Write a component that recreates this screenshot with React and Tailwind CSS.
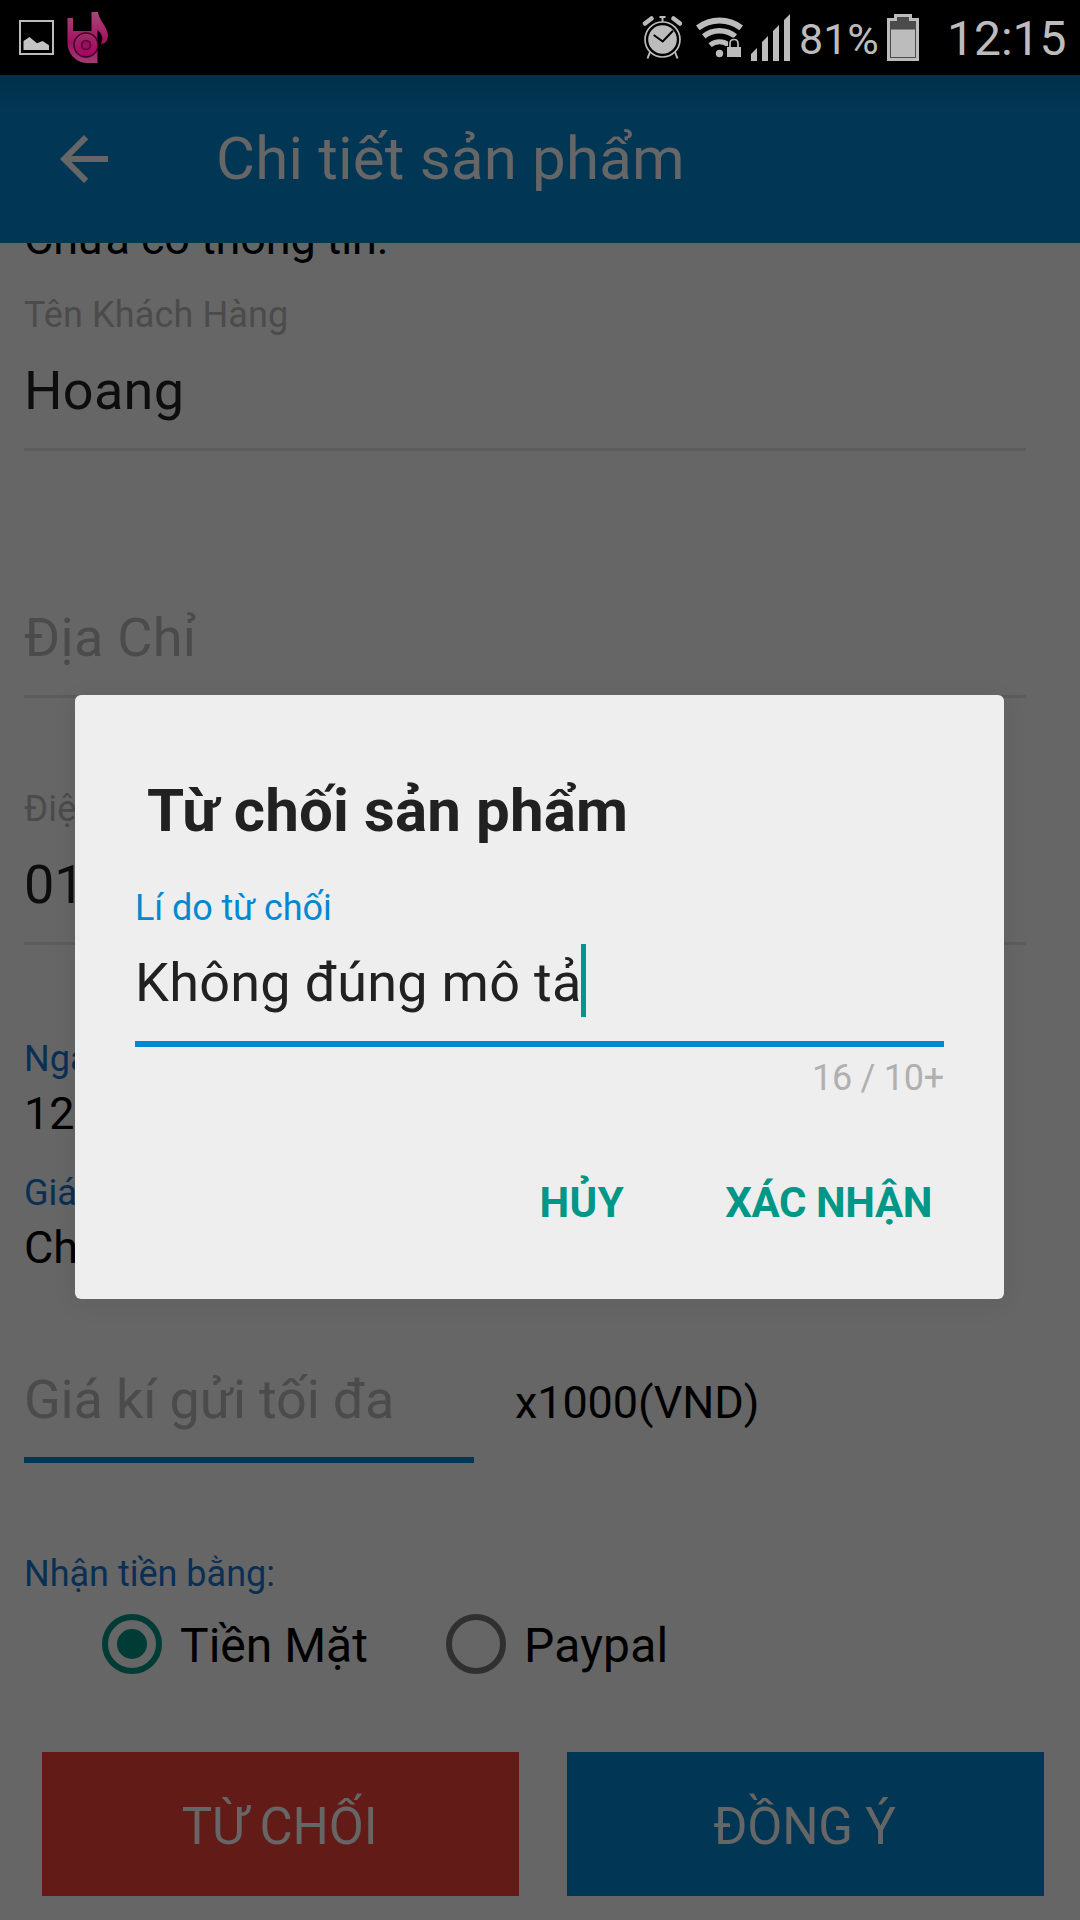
const StatusBar = () => (
  <div className="flex h-[75px] items-center bg-black text-[#bcbcbc]">
    <svg className="ml-[19px] mr-[13px] shrink-0" width="35" height="35" viewBox="0 0 35 35">
      <rect x="1" y="1" width="33" height="33" fill="none" stroke="#bcbcbc" strokeWidth="2" />
      <path d="M4.500 30V21L10.500 17L18 23.200L23.500 21L30 25.200V30Z" fill="#c4c4c4" />
    </svg>
    <svg className="shrink-0" width="42" height="51" viewBox="0 0 42 51">
      <defs>
        <linearGradient id="note" x1="0" y1="0" x2="0" y2="1">
          <stop offset="0" stopColor="#a5487a" />
          <stop offset="0.3" stopColor="#a82a6c" />
          <stop offset="0.6" stopColor="#a0105f" />
          <stop offset="1" stopColor="#a03e74" />
        </linearGradient>
        <linearGradient id="disc" x1="0" y1="0" x2="0" y2="1">
          <stop offset="0" stopColor="#a02c68" />
          <stop offset="1" stopColor="#a80062" />
        </linearGradient>
      </defs>
      <path d="M0.500 6H6V19H24.500V0H31C32 9 41 15 41 24Q40 32 34 32Q38 24 30.500 18V51H19C7 50 0.500 40 0.500 31Z" fill="url(#note)" />
      <circle cx="19" cy="33" r="12" fill="url(#disc)" stroke="#35001f" strokeWidth="1.300" />
      <circle cx="19" cy="33" r="4.500" fill="#96105c" stroke="#5a0036" strokeWidth="1.500" />
    </svg>
    <div className="grow" />
    <svg className="shrink-0" width="40" height="43" viewBox="0 0 40 43">
      <circle cx="20.500" cy="23.500" r="17.500" fill="none" stroke="#bcbcbc" strokeWidth="1.700" />
      <circle cx="20.500" cy="23.500" r="14.300" fill="#bcbcbc" />
      <path d="M11.700 19L20.700 25.500L31 14.700" fill="none" stroke="#000" strokeWidth="2" />
      <path d="M17.500 1H23.500M20.500 1V6M8 36L5.500 42.500M33 36L35.500 42.500" stroke="#bcbcbc" strokeWidth="2" />
      <path d="M3 7.500L9.500 2.500M38 7.500L31.500 2.500" stroke="#bcbcbc" strokeWidth="4.500" strokeLinecap="round" />
    </svg>
    <svg className="ml-[14px] shrink-0" width="47" height="43" viewBox="0 0 47 43">
      <g fill="none" stroke="#bcbcbc">
        <path d="M1.800 11.900A35.500 35.500 0 0 1 45.200 11.900" strokeWidth="6" />
        <path d="M7.700 20.300A25.200 25.200 0 0 1 39.300 20.300" strokeWidth="5.500" />
        <path d="M14.100 29.200A14.300 14.300 0 0 1 32.900 29.200" strokeWidth="5" />
      </g>
      <circle cx="23.500" cy="37.500" r="3.700" fill="#bcbcbc" />
      <path d="M30 30H32V27Q32 21.500 38 21.500Q44 21.500 44 27V30H46V42H30Z" fill="#000" />
      <rect x="31" y="31" width="14" height="10" fill="#bcbcbc" />
      <path d="M34 31V27.500Q34 23.500 38 23.500Q42 23.500 42 27.500V31" fill="none" stroke="#bcbcbc" strokeWidth="1.700" />
    </svg>
    <svg className="ml-[8px] shrink-0" width="40" height="47" viewBox="0 0 40 47">
      <path d="M0 47V40L6 34V47ZM11 47V28L17 22V47ZM22 47V17L28 11V47ZM33 47V6L39 0V47Z" fill="#bcbcbc" />
    </svg>
    <span className="ml-[8px] mt-[3px] w-[78px] text-[43px] leading-none">81%</span>
    <svg className="ml-[10px] shrink-0" width="32" height="47" viewBox="0 0 32 47">
      <path d="M0 4H7V0H25V4H32V47H0Z" fill="#bcbcbc" />
      <path d="M3 7H10V3H22V7H29V15H3Z" fill="#4b4b4b" />
      <rect x="3.500" y="15" width="25" height="28.500" fill="none" stroke="#4b4b4b" strokeWidth="1" />
    </svg>
    <span className="ml-[28px] mt-[3px] mr-[13px] w-[120px] text-[48px] leading-none">12:15</span>
  </div>
);

const Radio = ({ checked }) => (
  <svg width="60" height="60" viewBox="0 0 60 60">
    <circle cx="30" cy="30" r="27" fill="none" stroke={checked ? "#003c36" : "#303030"} strokeWidth="6" />
    {checked && <circle cx="30" cy="30" r="15" fill="#003c36" />}
  </svg>
);

const Rule = () => <div className="h-[3px] w-[1002px] bg-[#5c5c5c]" />;

export default function App() {
  return (
    <div
      className="relative flex h-[1920px] w-[1080px] flex-col overflow-hidden whitespace-nowrap bg-[#666666]"
      style={{ fontFamily: "Roboto, sans-serif" }}
    >
      <StatusBar />
      <header className="flex h-[168px] items-center bg-linear-to-b from-[#00304a] to-[#013654] to-20% pl-12 text-[#666666]">
        <svg width="72" height="72" viewBox="0 0 24 24" fill="currentColor">
          <path d="M20 11H7.830l5.590-5.590L12 4l-8 8 8 8 1.410-1.410L7.830 13H20v-2z" />
        </svg>
        <h1 className="ml-[96px] text-[60px] leading-[72px] tracking-[0.18px]">Chi tiết sản phẩm</h1>
      </header>

      <main className="flex flex-col px-6 text-black">
        <div className="h-[29px] overflow-hidden">
          <p className="mt-[-31px] text-[45px] leading-[54px] tracking-[-0.13px]">Chưa có thông tin.</p>
        </div>
        <label className="mt-[21px] text-[36px] leading-[44px] tracking-[0.12px] text-[#4b4b4b]">Tên Khách Hàng</label>
        <div className="mt-[22px] h-[89px] text-[54px] leading-[64px] tracking-[0.3px] text-[#0d0d0d]">Hoang</div>
        <Rule />
        <div className="mt-[155px] h-[89px] text-[54px] leading-[64px] tracking-[0.3px] text-[#4b4b4b]">Địa Chỉ</div>
        <Rule />
        <label className="mt-[89px] text-[36px] leading-[44px] tracking-[0.12px] text-[#4b4b4b]">Điện</label>
        <div className="mt-[22px] h-[89px] text-[54px] leading-[64px] text-[#0d0d0d]">01</div>
        <Rule />
        <div className="mt-[92px] text-[36px] leading-[44px] text-[#0a2f54]">Ngày</div>
        <div className="mt-[6px] text-[45px] leading-[54px]">12</div>
        <div className="mt-[30px] text-[36px] leading-[44px] text-[#0a2f54]">Giá</div>
        <div className="mt-[6px] text-[45px] leading-[54px]">Chưa</div>
        <div className="mt-[93px] flex items-baseline">
          <div className="h-[89px] w-[450px] text-[54px] leading-[64px] tracking-[-0.18px] text-[#4b4b4b]">Giá kí gửi tối đa</div>
          <span className="ml-[41px] text-[45px] leading-[54px] tracking-[-0.1px]">x1000(VND)</span>
        </div>
        <div className="h-[6px] w-[450px] bg-[#013654]" />
        <div className="mt-[89px] text-[36px] leading-[44px] text-[#0a2f54]">Nhận tiền bằng:</div>
        <div className="mt-[18px] flex h-[60px] items-center pl-[78px] text-[48px]">
          <Radio checked />
          <span className="ml-[18px] mt-[4px] w-[266px] leading-[60px]">Tiền Mặt</span>
          <Radio />
          <span className="ml-[18px] mt-[4px] leading-[60px] tracking-[0.2px]">Paypal</span>
        </div>
        <div className="mt-[78px] flex gap-12 pl-[18px] text-[51px] tracking-[-0.2px] text-[#666666]">
          <button className="h-[144px] w-[477px] bg-[#621b16] pt-[7px] pr-[2px]">TỪ CHỐI</button>
          <button className="h-[144px] w-[477px] bg-[#013654] pt-[7px] pr-[2px]">ĐỒNG Ý</button>
        </div>
      </main>

      <section
        role="dialog"
        className="absolute left-[75px] top-[695px] flex h-[604px] w-[929px] flex-col rounded-[6px] bg-[#eeeeee] px-[60px] text-[#212121] shadow-[0_4px_24px_rgba(0,0,0,0.08)]"
      >
        <h2 className="ml-[12px] mt-[80px] text-[60px] font-bold leading-[72px] tracking-[0.15px]">Từ chối sản phẩm</h2>
        <label className="mt-[39px] text-[36px] leading-[44px] tracking-[-0.1px] text-[#0288d1]">Lí do từ chối</label>
        <div className="mt-[14px] flex h-[73px] items-center text-[54px] tracking-[0.28px]">
          <span className="mt-[5px] leading-[64px]">Không đúng mô tả</span>
          <i className="-ml-px h-[73px] w-[5px] bg-[#009688]" />
        </div>
        <div className="mt-[24px] h-[6px] w-[809px] bg-[#0288d1]" />
        <div className="mt-[9px] text-right text-[36px] leading-[44px] tracking-[-0.25px] text-[#b0b0b0]">16 / 10+</div>
        <div className="mt-[77px] flex justify-end pr-[12px] text-[42px] font-bold leading-[52px] text-[#009688]">
          <button className="tracking-[0.5px]">HỦY</button>
          <button className="ml-[101px] tracking-[-0.4px]">XÁC NHẬN</button>
        </div>
      </section>
    </div>
  );
}
